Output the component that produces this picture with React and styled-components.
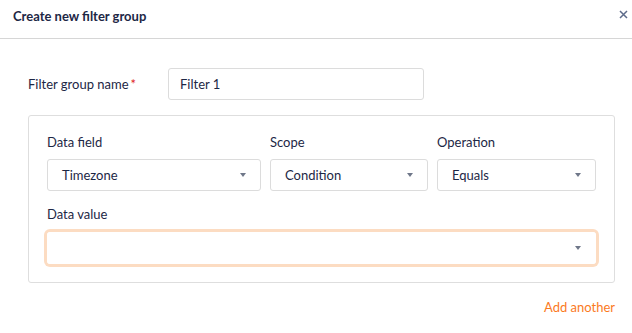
import React from 'react'
import styled, { createGlobalStyle } from 'styled-components'

const GlobalStyle = createGlobalStyle`
  body {
    margin: 0;
    background: #ffffff;
    font-family: Lato, "Open Sans", sans-serif;
    color: #1d2745;
  }
`

const Dialog = styled.div`
  width: 632px;
  height: 333px;
  background: #fff;
`

const Header = styled.div`
  height: 38px;
  display: flex;
  align-items: center;
  justify-content: space-between;
  padding: 0 4px 0 13px;
  border-bottom: 1px solid #d6d6d6;
  box-sizing: content-box;
`

const Title = styled.h1`
  margin: 0;
  margin-top: -6px;
  font-size: 13px;
  font-weight: 700;
  color: #1d2745;
`

const Close = styled.button`
  border: 0;
  background: none;
  padding: 0;
  margin-top: -10px;
  width: 10px;
  height: 10px;
  display: flex;
  align-items: center;
  justify-content: center;
  cursor: pointer;
`

const Body = styled.div`
  padding: 29px 17px 0 28px;
`

const NameRow = styled.div`
  display: flex;
  align-items: center;
`

const NameLabel = styled.label`
  width: 140px;
  font-size: 13px;
  color: #1d2745;
`

const Required = styled.span`
  color: #e02424;
  margin-left: 2px;
`

const TextInput = styled.input`
  width: 256px;
  height: 32px;
  box-sizing: border-box;
  border: 1px solid #dcdcdc;
  border-radius: 3px;
  padding: 0 11px;
  font-family: inherit;
  font-size: 13px;
  color: #1d2745;
  outline: none;
`

const Panel = styled.div`
  margin-top: 15px;
  border: 1px solid #dedede;
  border-radius: 3px;
  padding: 17px 18px 18px 18px;
`

const Grid = styled.div`
  display: grid;
  grid-template-columns: 214px 158px 159px;
  column-gap: 9px;
`

const Field = styled.div`
  display: flex;
  flex-direction: column;
  margin-top: ${p => (p.$spaced ? '14px' : '0')};
`

const FieldLabel = styled.div`
  font-size: 13px;
  line-height: 18px;
  margin-bottom: ${p => (p.$gap || 8)}px;
  color: #1d2745;
`

const SelectBox = styled.div`
  height: 32px;
  box-sizing: border-box;
  border: 1px solid ${p => (p.$focused ? '#fff' : '#dcdcdc')};
  border-radius: 3px;
  display: flex;
  align-items: center;
  justify-content: space-between;
  padding: 0 14px 0 14px;
  font-size: 13px;
  color: #1d2745;
  box-shadow: ${p => (p.$focused ? '0 0 0 3px #fcdcc2' : 'none')};
`

const Caret = styled.span`
  width: 0;
  height: 0;
  border-left: 3.5px solid transparent;
  border-right: 3.5px solid transparent;
  border-top: 4px solid #6f7789;
`

const Footer = styled.div`
  display: flex;
  justify-content: flex-end;
  margin-top: 15px;
`

const LinkButton = styled.button`
  border: 0;
  background: none;
  padding: 0;
  font-family: inherit;
  font-size: 13px;
  line-height: 18px;
  color: #fb7a1e;
  cursor: pointer;
`

const Select = ({ value, focused }) => (
  <SelectBox $focused={focused}>
    <span>{value}</span>
    <Caret />
  </SelectBox>
)

export default function App() {
  return (
    <Dialog>
      <GlobalStyle />
      <Header>
        <Title>Create new filter group</Title>
        <Close aria-label="Close">
          <svg width="9" height="9" viewBox="0 0 9 9">
            <path d="M1 1L8 8M8 1L1 8" stroke="#5d6b8a" strokeWidth="1.5" />
          </svg>
        </Close>
      </Header>
      <Body>
        <NameRow>
          <NameLabel>
            Filter group name<Required>*</Required>
          </NameLabel>
          <TextInput defaultValue="Filter 1" />
        </NameRow>
        <Panel>
          <Grid>
            <Field>
              <FieldLabel>Data field</FieldLabel>
              <Select value="Timezone" />
            </Field>
            <Field>
              <FieldLabel>Scope</FieldLabel>
              <Select value="Condition" />
            </Field>
            <Field>
              <FieldLabel>Operation</FieldLabel>
              <Select value="Equals" />
            </Field>
          </Grid>
          <Field $spaced>
            <FieldLabel $gap={9}>Data value</FieldLabel>
            <Select value="" focused />
          </Field>
        </Panel>
        <Footer>
          <LinkButton>Add another</LinkButton>
        </Footer>
      </Body>
    </Dialog>
  )
}
